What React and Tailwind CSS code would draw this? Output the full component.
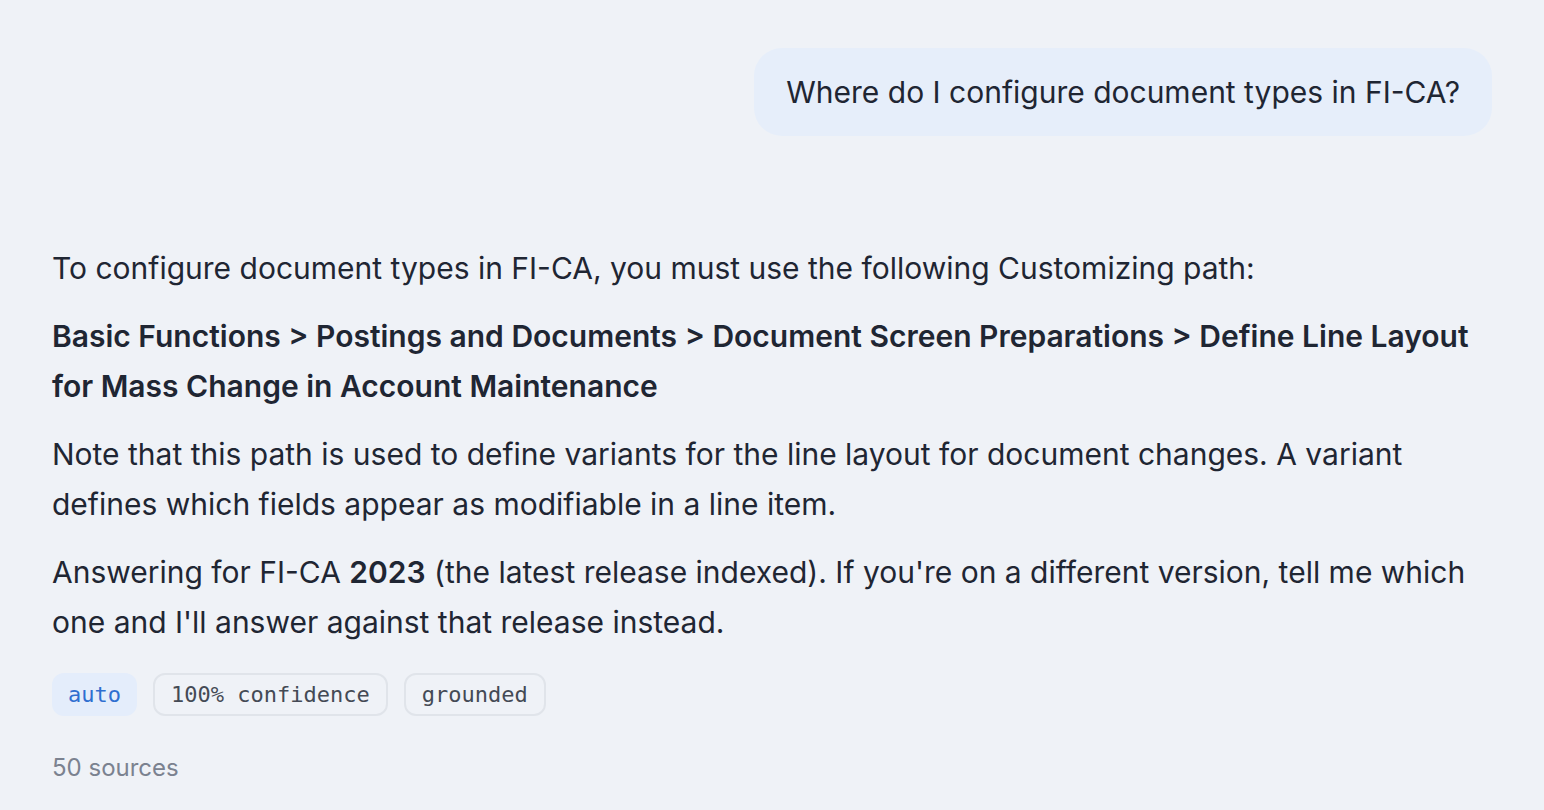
export default function App() {
  return (
    <div
      className="min-h-screen bg-[#eff2f7] text-[#1f2633] px-[52px] pt-[48px] pb-10"
      style={{ fontFamily: "Inter, 'Noto Sans', sans-serif" }}
    >
      {/* user message */}
      <div className="flex justify-end">
        <div className="bg-[#e6eefa] rounded-[28px] px-[32px] h-[88px] flex items-center text-[30px]">
          Where do I configure document types in FI-CA?
        </div>
      </div>

      {/* answer */}
      <div className="mt-[107px] text-[30px] leading-[50px] flex flex-col gap-[18px]">
        <p>To configure document types in FI-CA, you must use the following Customizing path:</p>
        <p className="font-semibold">
          Basic Functions &gt; Postings and Documents &gt; Document Screen Preparations &gt; Define Line Layout
          for Mass Change in Account Maintenance
        </p>
        <p>
          Note that this path is used to define variants for the line layout for document changes. A variant
          defines which fields appear as modifiable in a line item.
        </p>
        <p>
          Answering for FI-CA <span className="font-semibold">2023</span> (the latest release indexed). If
          you're on a different version, tell me which one and I'll answer against that release instead.
        </p>
      </div>

      <div
        className="mt-[26px] flex gap-[16px] text-[22px]"
        style={{ fontFamily: "'DejaVu Sans Mono', monospace" }}
      >
        <span className="bg-[#e4edfb] text-[#2f6fd0] rounded-[12px] px-[16px] h-[43px] flex items-center">
          auto
        </span>
        <span className="border-2 border-[#e0e4ea] text-[#444a55] rounded-[12px] px-[16px] h-[43px] flex items-center">
          100% confidence
        </span>
        <span className="border-2 border-[#e0e4ea] text-[#444a55] rounded-[12px] px-[16px] h-[43px] flex items-center">
          grounded
        </span>
      </div>

      <div className="mt-[34px] text-[24px] text-[#7b8290]">50 sources</div>
    </div>
  );
}
